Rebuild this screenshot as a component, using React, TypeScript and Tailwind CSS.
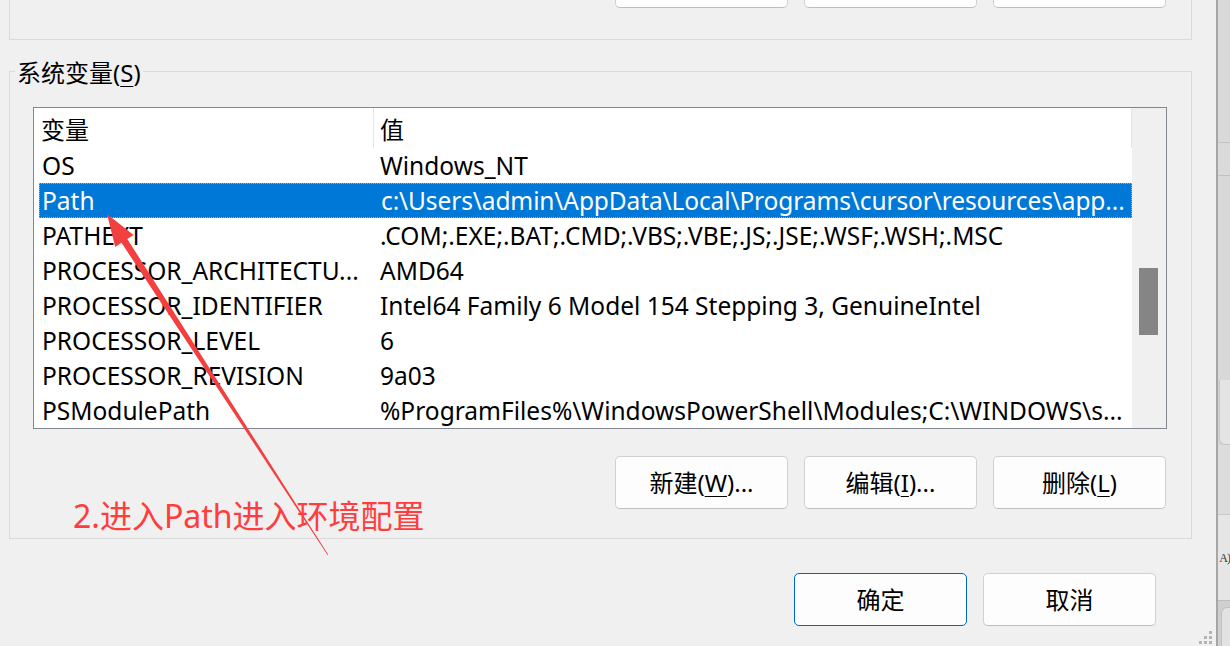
import React from "react";

const rows: { name: string; value: string; selected?: boolean }[] = [
  { name: "OS", value: "Windows_NT" },
  { name: "Path", value: "c:\\Users\\admin\\AppData\\Local\\Programs\\cursor\\resources\\app...", selected: true },
  { name: "PATHEXT", value: ".COM;.EXE;.BAT;.CMD;.VBS;.VBE;.JS;.JSE;.WSF;.WSH;.MSC" },
  { name: "PROCESSOR_ARCHITECTU...", value: "AMD64" },
  { name: "PROCESSOR_IDENTIFIER", value: "Intel64 Family 6 Model 154 Stepping 3, GenuineIntel" },
  { name: "PROCESSOR_LEVEL", value: "6" },
  { name: "PROCESSOR_REVISION", value: "9a03" },
  { name: "PSModulePath", value: "%ProgramFiles%\\WindowsPowerShell\\Modules;C:\\WINDOWS\\s..." },
];

function Btn({ children, primary }: { children: React.ReactNode; primary?: boolean }) {
  return (
    <div
      className={
        "w-[173px] h-[53px] shrink-0 rounded-[5px] bg-[#fdfdfd] flex items-center justify-center text-[24px] text-black " +
        (primary ? "border border-[#0067c0]" : "border border-[#d0d0d0] border-b-[#bdbdbd]")
      }
    >
      {children}
    </div>
  );
}

function U({ children }: { children: React.ReactNode }) {
  return <span className="underline underline-offset-[4px] decoration-1">{children}</span>;
}

export default function App() {
  return (
    <div className="w-[1230px] h-[646px] overflow-hidden bg-[#f0f0f0] flex relative font-['Noto_Sans','Noto_Sans_CJK_SC',sans-serif] text-black">
      {/* dialog */}
      <div className="w-[1216px] h-full flex flex-col relative">
        {/* top group (partially visible) */}
        <div className="ml-[9px] w-[1183px] h-[40px] border-x border-b border-[#dadada] flex justify-end pr-[25px]">
          <div className="-mt-[45px] flex gap-[16px]">
            <Btn>{" "}</Btn>
            <Btn>{" "}</Btn>
            <Btn>{" "}</Btn>
          </div>
        </div>

        {/* system variables group */}
        <div className="ml-[9px] mt-[31px] w-[1183px] h-[468px] border border-[#dadada] relative flex flex-col">
          <span className="absolute left-[5px] -top-[17px] bg-[#f0f0f0] px-[2px] text-[24px] leading-[36px] whitespace-nowrap">
            系统变量(<U>S</U>)
          </span>

          {/* list view */}
          <div className="ml-[23px] mt-[35px] w-[1134px] h-[322px] border border-[#828790] bg-white flex">
            <div className="w-[1098px] flex flex-col">
              {/* header */}
              <div className="h-[40px] flex items-stretch text-[24px] pl-[5px]">
                <div className="w-[335px] border-r border-[#e5e5e5] pl-[2px] pt-[3px] flex items-center">变量</div>
                <div className="flex-1 pl-[6px] pt-[3px] flex items-center border-r border-[#e5e5e5]">值</div>
              </div>
              {rows.map((r) => (
                <div key={r.name} className="h-[35px] pl-[5px] flex">
                  <div
                    className={
                      "flex-1 flex items-center pt-[2px] text-[24.5px] whitespace-nowrap overflow-hidden " +
                      (r.selected ? "bg-[#0078d7] text-white border border-dotted border-[#f3a04a]" : "")
                    }
                  >
                    <div className={"w-[335px] shrink-0 overflow-hidden text-ellipsis " + (r.selected ? "pl-[2px]" : "pl-[3px]")}>
                      {r.name}
                    </div>
                    <div
                      className={
                        "flex-1 min-w-0 pl-[6px] overflow-hidden text-ellipsis " +
                        (r.selected ? "tracking-[-0.12px] pr-0" : "pr-[4px]")
                      }
                    >
                      {r.value}
                    </div>
                  </div>
                </div>
              ))}
            </div>
            {/* scrollbar */}
            <div className="w-[34px] bg-[#f0f0f0] flex flex-col pl-[7px] pt-[160px]">
              <div className="w-[19px] h-[67px] bg-[#858585]" />
            </div>
          </div>

          {/* new/edit/delete */}
          <div className="ml-[23px] w-[1134px] mt-[27px] flex justify-end gap-[16px] pr-[1px]">
            <Btn>
              新建(<U>W</U>)...
            </Btn>
            <Btn>
              编辑(<U>I</U>)...
            </Btn>
            <Btn>
              删除(<U>L</U>)
            </Btn>
          </div>
        </div>

        {/* OK / Cancel */}
        <div className="mt-[34px] flex justify-end gap-[16px] pr-[60px]">
          <Btn primary>确定</Btn>
          <Btn>取消</Btn>
        </div>

        {/* resize grip */}
        <svg className="absolute right-[3px] bottom-[1px]" width="14" height="14" viewBox="0 0 14 14">
          <rect x="10" y="0" width="3" height="3" fill="#b4b4b4" />
          <rect x="10" y="5" width="3" height="3" fill="#b4b4b4" />
          <rect x="5" y="5" width="3" height="3" fill="#b4b4b4" />
          <rect x="10" y="10" width="3" height="3" fill="#b4b4b4" />
          <rect x="5" y="10" width="3" height="3" fill="#b4b4b4" />
          <rect x="0" y="10" width="3" height="3" fill="#b4b4b4" />
        </svg>
      </div>

      {/* background window strip */}
      <div className="w-[14px] h-full border-l-2 border-[#a6a6a6] flex flex-col bg-[#d6d6d6] overflow-hidden">
        <div className="h-[142px] bg-[#d9d9d9]" />
        <div className="h-[34px] border-y border-[#c2c2c2] bg-[#dadada]" />
        <div className="h-[204px] bg-[#d8d8d8]" />
        <div className="h-[65px] bg-[#e4e4e4] border-l border-b border-[#c6c6c6] rounded-bl-[6px] ml-[1px]" />
        <div className="h-[70px] bg-[#dcdcdc] border-b border-[#c8c8c8]" />
        <div className="h-[85px] bg-[#e6e6e6] flex items-center justify-end">
          <span className="text-[12px] tracking-[-1px] text-[#333] whitespace-nowrap font-['Liberation_Serif',serif]">A)</span>
        </div>
        <div className="flex-1 bg-[#cfcfcf] border-t border-[#bdbdbd] pt-[6px] pl-[3px]">
          <div className="h-full bg-[#e2e2e2] border-l border-t border-[#c0c0c0] rounded-tl-[6px]" />
        </div>
      </div>

      {/* red annotation */}
      <svg className="absolute left-0 top-0 pointer-events-none" width="1230" height="646" viewBox="0 0 1230 646">
        <polygon
          points="107,214 133.6,234.9 127.3,239.0 328.3,554.8 327.7,555.2 121.5,242.8 115.2,246.9"
          fill="#f24040"
        />
      </svg>
      <div className="absolute left-[73px] top-[497px] text-[32px] leading-[38px] text-[#ff3d3d] whitespace-nowrap">
        2.进入Path进入环境配置
      </div>
    </div>
  );
}
